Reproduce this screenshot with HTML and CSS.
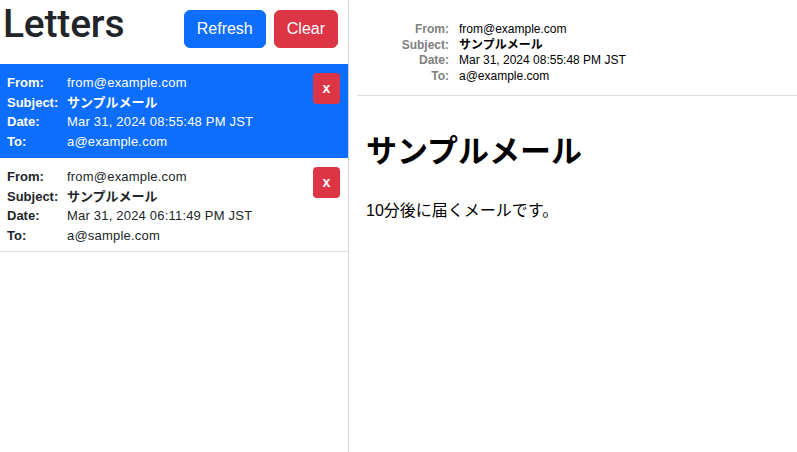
FILE: index.html
```html
<!DOCTYPE html>
<html lang="ja">
<head>
<meta charset="utf-8">
<title>Letters</title>
<link rel="stylesheet" href="styles.css">
</head>
<body>
<div class="app">
  <aside class="sidebar">
    <header class="topbar">
      <h1 class="title">Letters</h1>
      <div class="actions">
        <button class="btn btn-primary">Refresh</button>
        <button class="btn btn-danger">Clear</button>
      </div>
    </header>
    <ul class="letters">
      <li class="letter active">
        <dl class="fields">
          <dt>From:</dt><dd>from@example.com</dd>
          <dt>Subject:</dt><dd class="subject">サンプルメール</dd>
          <dt>Date:</dt><dd>Mar 31, 2024 08:55:48 PM JST</dd>
          <dt>To:</dt><dd>a@example.com</dd>
        </dl>
        <button class="btn-x">x</button>
      </li>
      <li class="letter">
        <dl class="fields">
          <dt>From:</dt><dd>from@example.com</dd>
          <dt>Subject:</dt><dd class="subject">サンプルメール</dd>
          <dt>Date:</dt><dd>Mar 31, 2024 06:11:49 PM JST</dd>
          <dt>To:</dt><dd>a@sample.com</dd>
        </dl>
        <button class="btn-x">x</button>
      </li>
    </ul>
  </aside>
  <main class="viewer">
    <dl class="meta">
      <dt>From:</dt><dd>from@example.com</dd>
      <dt>Subject:</dt><dd class="subject">サンプルメール</dd>
      <dt>Date:</dt><dd>Mar 31, 2024 08:55:48 PM JST</dd>
      <dt>To:</dt><dd>a@example.com</dd>
    </dl>
    <article class="message">
      <h2 class="message-title">サンプルメール</h2>
      <p class="message-body">10分後に届くメールです。</p>
    </article>
  </main>
</div>
</body>
</html>
```

FILE: styles.css
```css
* { box-sizing: border-box; }

html, body {
  margin: 0;
  padding: 0;
  height: 100%;
}

body {
  font-family: "Liberation Sans", "Noto Sans CJK JP", sans-serif;
  color: #212529;
  background: #fff;
}

.app {
  display: flex;
  height: 452px;
}

.sidebar {
  width: 349px;
  flex: none;
  border-right: 1px solid #d4d4d4;
  display: flex;
  flex-direction: column;
}

.topbar {
  display: flex;
  justify-content: space-between;
  height: 64px;
  padding: 0 10px 0 3px;
}

.title {
  margin: 0;
  font-family: Roboto, "Liberation Sans", sans-serif;
  font-size: 39px;
  line-height: 48px;
  font-weight: 500;
  letter-spacing: -0.2px;
  color: #212529;
}

.actions {
  display: flex;
  gap: 8px;
  padding-top: 10px;
  align-items: flex-start;
}

.btn {
  font-family: inherit;
  font-size: 16px;
  line-height: 24px;
  padding: 6px 12px;
  border: 1px solid transparent;
  border-radius: 6px;
  color: #fff;
}

.btn-primary { background: #0d6efd; border-color: #0d6efd; }
.btn-danger { background: #dc3545; border-color: #dc3545; }

.letters {
  list-style: none;
  margin: 0;
  padding: 0;
}

.letter {
  display: flex;
  justify-content: space-between;
  align-items: flex-start;
  padding: 9px 8px 7px 7px;
  border-bottom: 1px solid #dee2e6;
  height: 94px;
}

.letter.active {
  background: #0d6efd;
  border-bottom-color: #0d6efd;
  color: #fff;
}

.fields {
  margin: 0;
  display: grid;
  grid-template-columns: 60px auto;
  font-size: 13px;
  line-height: 19.5px;
}

.fields dt { font-weight: 700; }
.fields dd { margin: 0; letter-spacing: 0.2px; }
.fields dd.subject { letter-spacing: 0; }
.subject { font-weight: 700; }

.btn-x {
  margin-top: 0;
  width: 27px;
  height: 31px;
  padding: 0;
  border: none;
  border-radius: 4px;
  background: #dc3545;
  color: #fff;
  font-family: inherit;
  font-size: 14px;
  font-weight: 700;
  line-height: 31px;
}

.viewer {
  flex: 1;
  min-width: 0;
}

.meta {
  margin: 0 0 0 8px;
  padding: 22px 0 11px 0;
  border-bottom: 1px solid #dcdcdc;
  display: grid;
  grid-template-columns: 92px auto;
  column-gap: 10px;
  font-size: 12px;
  line-height: 15.6px;
  color: #000;
}

.meta dt {
  text-align: right;
  font-weight: 700;
  color: #808080;
}

.meta dd { margin: 0; }

.message {
  padding: 0 8px 0 17px;
  color: #000;
}

.message-title {
  margin: 37px 0 0;
  font-size: 31px;
  line-height: 38px;
  font-weight: 700;
}

.message-body {
  margin: 30px 0 0;
  font-size: 16px;
  line-height: 20px;
}
```
